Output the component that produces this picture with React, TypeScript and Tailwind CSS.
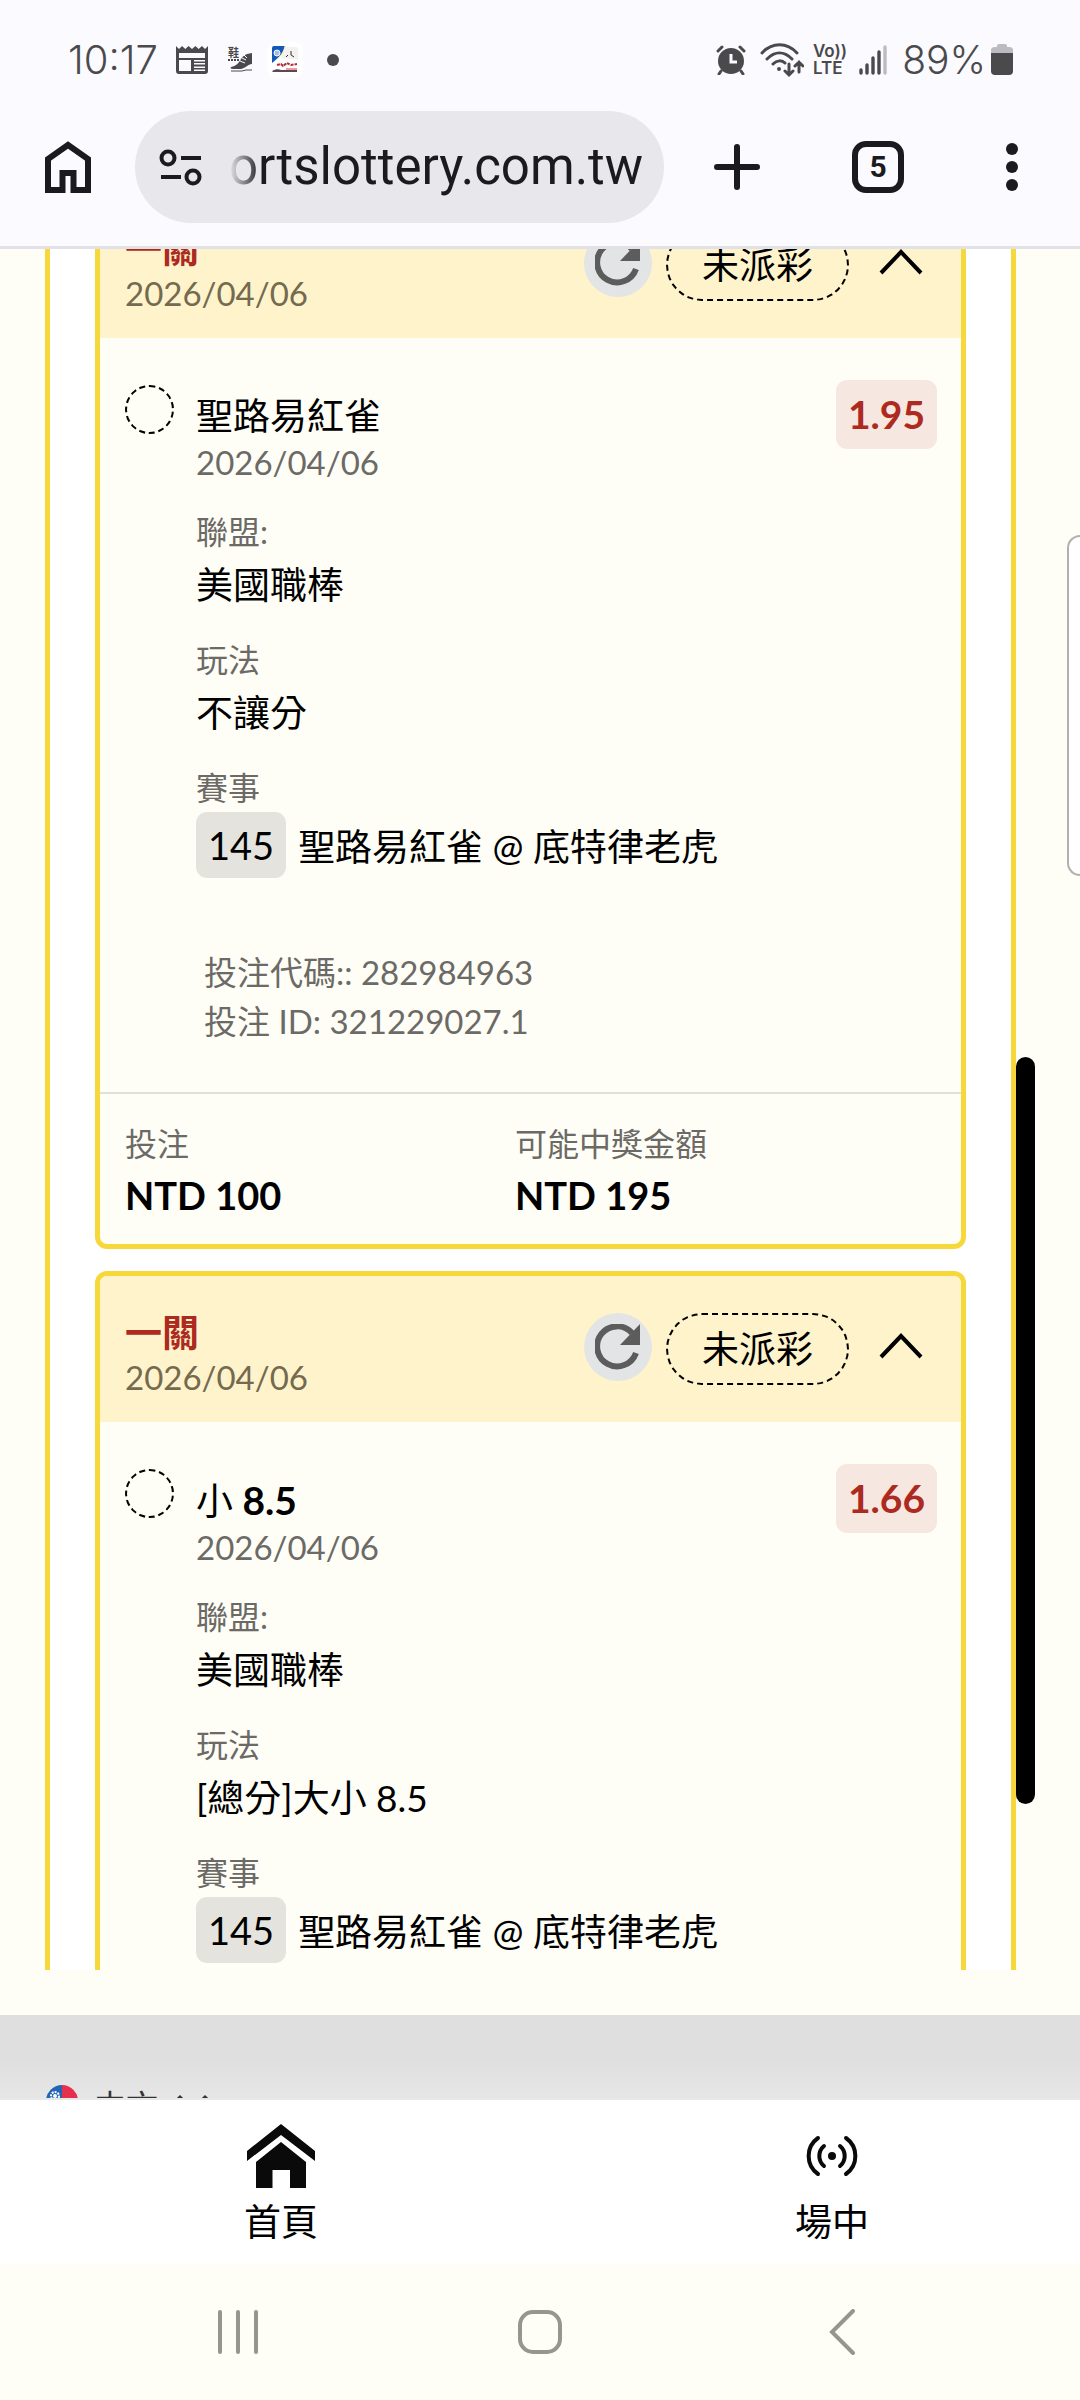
import React from "react";

type Bet = {
  id: string;
  title: React.ReactNode;
  date: string;
  odds: string;
  fields: { label: string; value: string }[];
  eventNo: string;
  match: string;
  code: string;
  betId: string;
  stake: string;
  payout: string;
};

const bets: Bet[] = [
  {
    id: "a",
    title: "聖路易紅雀",
    date: "2026/04/06",
    odds: "1.95",
    fields: [
      { label: "聯盟:", value: "美國職棒" },
      { label: "玩法", value: "不讓分" },
    ],
    eventNo: "145",
    match: "聖路易紅雀 @ 底特律老虎",
    code: "投注代碼:: 282984963",
    betId: "投注 ID: 321229027.1",
    stake: "NTD 100",
    payout: "NTD 195",
  },
  {
    id: "b",
    title: (
      <>
        小 <b className="text-[39px] font-bold">8.5</b>
      </>
    ),
    date: "2026/04/06",
    odds: "1.66",
    fields: [
      { label: "聯盟:", value: "美國職棒" },
      { label: "玩法", value: "[總分]大小 8.5" },
    ],
    eventNo: "145",
    match: "聖路易紅雀 @ 底特律老虎",
    code: "",
    betId: "",
    stake: "",
    payout: "",
  },
];

function StatusBar() {
  return (
    <div className="flex h-[111px] items-center pt-2 pr-[67px] pl-[68px] font-['Inter','Noto_Sans_CJK_TC',sans-serif] text-[#4a4a4c]">
      <span className="text-[40px] leading-none font-light">10:17</span>
      <svg width="32" height="28" viewBox="0 0 32 28" aria-hidden="true" className="ml-[18px]">
        <path d="M0 0l3 3 3-3 3.300 3 3.300-3 3.400 3 3.400-3 3.300 3 3.300-3 3 3 3-3v25q0 3-3 3H3q-3 0-3-3z" fill="currentColor" />
        <path d="M3 7h26v5H3zM3 14h12v11H3zM18 14h11v1.500H18zM18 17h11v1.500H18zM18 20.500h11V22H18zM18 23.500h11V25H18z" fill="#fbfaff" />
      </svg>
      <svg width="25" height="25" viewBox="0 0 25 25" aria-hidden="true" fill="currentColor" className="ml-5 overflow-visible">
        <text x="0" y="10" fontSize="11" fontWeight="700" fontFamily="Noto Sans CJK TC">
          鞋
        </text>
        <path d="M0 12h2v2H0zM3 12h2v2H3zM6 12h2v2H6zM9 12h2v2H9z" />
        <path d="M3 20c5-1 8-4 10-8 2-3 4-4 6-5l5-1v11c-4 0-6 4-11 5H5c-2 0-3-1-2-2z" />
        <path d="M12 14l5 2M14 11l4 2M16 8l3 3" stroke="#fbfaff" />
        <path d="M3 24h11l4-1h6" stroke="currentColor" fill="none" />
      </svg>
      <svg width="36" height="36" viewBox="0 0 36 36" aria-hidden="true" className="ml-[14px]">
        <rect width="36" height="36" rx="9" fill="#fff" />
        <path d="M7 4h11c-2 6-4 10-13 17V6q0-2 2-2z" fill="#1558b8" />
        <path d="M18 4c-1 6-3 9-8 13" stroke="#f3d98c" fill="none" />
        <path d="M18 5h11q2 0 2 2v11l-17-2z" fill="#f3f2ee" />
        <circle cx="10" cy="11" r="3" fill="#9cc0ee" stroke="#fff" />
        <path d="M24 9v4l3 2M19 15l2-2" stroke="#333" fill="none" />
        <path d="M10 23l4-1 2 2 4-3 4 2 6-1" stroke="#b12c38" strokeWidth="2" strokeDasharray="3 1" fill="none" />
        <path d="M19 27h11" stroke="#f09aa0" strokeWidth="2" />
        <path d="M5 29c3-2 7-2 9-1h16v2H6z" fill="#5a4a58" />
      </svg>
      <span className="ml-6 size-3 rounded-full bg-[#4a4a4c]" />
      <div className="ml-auto flex items-center">
        <svg width="30" height="30" viewBox="0 0 30 30" aria-hidden="true" className="mr-[14px]">
          <circle cx="15" cy="16" r="13" fill="currentColor" />
          <path d="M2 6l4-4M28 6l-4-4M5 26l-2 3M25 26l2 3" stroke="currentColor" strokeWidth="3" strokeLinecap="round" />
          <path d="M15 9v8h6" stroke="#fbfaff" strokeWidth="3" fill="none" />
        </svg>
        <svg width="44" height="36" viewBox="0 0 44 36" aria-hidden="true" className="mr-[9px]" fill="none" stroke="currentColor" strokeWidth="3" strokeLinecap="round">
          <path d="M2 11c10-11 25-11 35 0M7 17c8-8 17-8 25 0M13 22c4-4 9-4 12-1" />
          <circle cx="19" cy="27" r="1" fill="currentColor" strokeWidth="2" />
          <path d="M29 22v10M25 29l4 4 4-4M39 30V20M35 24l4-4 4 4" />
        </svg>
        <div className="mr-3 flex flex-col text-[17px] leading-[17px] font-semibold">
          <span>Vo))</span>
          <span>LTE</span>
        </div>
        <svg width="28" height="30" viewBox="0 0 28 30" aria-hidden="true" className="mr-[15px]" strokeWidth="3.4" strokeLinecap="round" stroke="currentColor">
          <path d="M2 25v3M8 20v8M14 13v15M20 7v21" />
          <path d="M26 2v26" stroke="#bcbcc0" />
        </svg>
        <span className="text-[39px] leading-none font-light">89%</span>
        <svg width="22" height="31" viewBox="0 0 22 31" aria-hidden="true" className="ml-[5px]">
          <path d="M6 2q0-2 2-2h6q2 0 2 2v1h2q4 0 4 3v4H0V6q0-3 4-3h2z" fill="#bcbcc0" />
          <path d="M0 9h22v18q0 4-4 4H4q-4 0-4-4z" fill="currentColor" />
        </svg>
      </div>
    </div>
  );
}

function BrowserBar() {
  return (
    <div className="flex items-center pr-[45px] pb-[23px] pl-[45px] text-[#1b1b1f]">
      <button aria-label="Home" className="shrink-0">
        <svg width="46" height="52" viewBox="0 0 46 52" fill="none" stroke="currentColor" strokeWidth="6" aria-hidden="true">
          <path d="M3 49V18L23 4l20 14v31H28.500V32h-11v17z" />
        </svg>
      </button>
      <div className="ml-11 flex h-28 min-w-0 flex-1 items-center rounded-full bg-[#e8e7ec] pr-4 pl-6">
        <button aria-label="Site settings" className="shrink-0">
          <svg width="44" height="38" viewBox="0 0 44 38" fill="none" stroke="currentColor" strokeWidth="4" aria-hidden="true">
            <circle cx="9" cy="10" r="6.500" />
            <path d="M22 10h20M2 29h20" />
            <circle cx="34" cy="29" r="6.500" />
          </svg>
        </button>
        <input
          aria-label="Address"
          defaultValue="ortslottery.com.tw"
          className="ml-[26px] min-w-0 flex-1 bg-transparent font-['Roboto',sans-serif] text-[51px] leading-[64px] outline-none [mask-image:linear-gradient(to_right,transparent,black_32px)]"
        />
      </div>
      <button aria-label="New tab" className="ml-[50px] shrink-0">
        <svg width="46" height="46" viewBox="0 0 46 46" stroke="currentColor" strokeWidth="6" strokeLinecap="round" aria-hidden="true">
          <path d="M23 3v40M3 23h40" />
        </svg>
      </button>
      <button
        aria-label="Tabs"
        className="ml-[92px] flex size-[52px] shrink-0 items-center justify-center rounded-[14px] border-6 border-[#1b1b1f] font-['Roboto',sans-serif] text-[30px] leading-none font-bold"
      >
        5
      </button>
      <button aria-label="Menu" className="mr-[17px] ml-[102px] shrink-0">
        <svg width="12" height="48" viewBox="0 0 12 48" fill="currentColor" aria-hidden="true">
          <circle cx="6" cy="6" r="6" />
          <circle cx="6" cy="24" r="6" />
          <circle cx="6" cy="42" r="6" />
        </svg>
      </button>
    </div>
  );
}

function BetCard({ bet }: { bet: Bet }) {
  return (
    <article className="overflow-hidden rounded-[12px] border-5 border-[#f7d83a] bg-[#fffef6]">
      <header className="flex h-[146px] items-center bg-[#fff3cc] pr-[38px] pl-[25px]">
        <div className="pt-3">
          <h2 className="text-[37px] leading-[44px] font-bold text-[#ad2a20]">一關</h2>
          <p className="text-[33px] leading-[44px] text-[#746a4e]">{bet.date}</p>
        </div>
        <button aria-label="重新整理" className="mb-1 ml-auto flex size-[68px] items-center justify-center rounded-full bg-[#e3e4e6]">
          <svg width="46" height="46" viewBox="0 0 46 46" aria-hidden="true">
            <path d="M41 29A20 20 0 1 1 37 9" fill="none" stroke="#5c5c5c" strokeWidth="6" />
            <path d="M45 0v21H25z" fill="#5c5c5c" />
          </svg>
        </button>
        <span className="ml-[14px] flex h-[72px] items-center rounded-[36px] border-2 border-dashed border-black px-[34px] text-[37px]">未派彩</span>
        <button aria-label="收合" className="mb-1.5 ml-[30px]">
          <svg width="44" height="26" viewBox="0 0 44 26" fill="none" stroke="#000" strokeWidth="4" aria-hidden="true">
            <path d="M2 24L22 3l20 21" />
          </svg>
        </button>
      </header>

      <div className="flex items-start pt-[42px] pr-6 pl-[25px]">
        <span className="mt-[5px] size-[49px] shrink-0 rounded-full border-2 border-dashed border-black" />
        <div className="ml-[22px] flex-1">
          <h3 className="pt-3 text-[37px] leading-[48px]">{bet.title}</h3>
          <p className="text-[33px] leading-[44px] text-[#6b6a66]">{bet.date}</p>
          <dl className="flex flex-col gap-[22px] pt-6">
            {bet.fields.map((f) => (
              <div key={f.label}>
                <dt className="text-[32px] leading-[48px] text-[#6b6a66]">{f.label}</dt>
                <dd className="text-[37px] leading-[58px]">{f.value}</dd>
              </div>
            ))}
            <div>
              <dt className="text-[32px] leading-[48px] text-[#6b6a66]">賽事</dt>
              <dd className="flex items-center gap-3 text-[37px]">
                <span className="flex h-[66px] items-center rounded-[11px] bg-[#e5e3dd] px-3 text-[38px]">{bet.eventNo}</span>
                <span className="pt-1">{bet.match}</span>
              </dd>
            </div>
          </dl>
          <div className="mt-[70px] ml-2 pb-[46px] text-[33px] leading-[49px] text-[#6b6a66]">
            <p>{bet.code}</p>
            <p>{bet.betId}</p>
          </div>
        </div>
        <span className="flex h-[69px] items-center rounded-[11px] bg-[#f7e7e1] px-3 text-[39px] font-bold text-[#ad2a20]">{bet.odds}</span>
      </div>

      <dl className="grid grid-cols-2 border-t-2 border-[#e2e0da] pt-[26px] pr-14 pb-[22px] pl-[25px]">
        <div>
          <dt className="text-[32px] leading-[48px] text-[#6b6a66]">投注</dt>
          <dd className="text-[38px] leading-[54px] font-bold">{bet.stake}</dd>
        </div>
        <div>
          <dt className="text-[32px] leading-[48px] text-[#6b6a66]">可能中獎金額</dt>
          <dd className="text-[38px] leading-[54px] font-bold">{bet.payout}</dd>
        </div>
      </dl>
    </article>
  );
}

function SiteFooter() {
  return (
    <div className="h-[85px] overflow-hidden border-b-2 border-[#e8e8e8] bg-linear-to-b from-[#dfdfdf] from-50% to-[#e6e6e6] pt-[70px] pl-[46px]">
      <div className="flex items-start text-[32px] leading-[42px] text-[#333]">
        <svg width="32" height="32" viewBox="0 0 32 32" aria-hidden="true">
          <path d="M0 16A16 16 0 0 1 16 0v16z" fill="#2464b4" />
          <path d="M16 0a16 16 0 0 1 0 32A16 16 0 0 1 0 16h16z" fill="#e62e4d" />
          <circle cx="9" cy="11" r="4" fill="none" stroke="#fff" strokeWidth="2" strokeDasharray="2 1" />
          <circle cx="9" cy="11" r="2" fill="#fff" />
        </svg>
        <span className="ml-4">中文</span>
        <svg width="40" height="24" viewBox="0 0 40 24" className="ml-4" fill="none" stroke="#333" strokeWidth="3" aria-hidden="true">
          <path d="M0 18l6-6 6 6M25 18l6-6 6 6" />
        </svg>
      </div>
    </div>
  );
}

function TabBar() {
  return (
    <nav className="flex h-[164px] justify-between bg-white pr-[211px] pl-[244px]">
      <a href="#home" className="flex flex-col items-center pt-6 text-[37px]">
        <svg width="68" height="64" viewBox="0 0 68 64" fill="#0a0a0a" aria-hidden="true">
          <path d="M34 0l34 27v10L34 11 0 37V27z" />
          <path d="M34 18l25 20v26H43V46H25.500v18H9V38z" />
        </svg>
        <span className="mt-1.5 leading-[56px]">首頁</span>
      </a>
      <a href="#live" className="flex flex-col items-center pt-6 text-[37px]">
        <svg width="52" height="64" viewBox="0 0 52 64" fill="none" stroke="#0a0a0a" strokeWidth="4" strokeLinecap="round" aria-hidden="true">
          <circle cx="26" cy="32" r="4" fill="#0a0a0a" stroke="none" />
          <path d="M12 14a22 22 0 0 0 0 36M40 14a22 22 0 0 1 0 36M18 22a13 13 0 0 0 0 20M34 22a13 13 0 0 1 0 20" />
        </svg>
        <span className="mt-1.5 leading-[56px]">場中</span>
      </a>
    </nav>
  );
}

function SystemNav() {
  return (
    <div className="grid h-[136px] grid-cols-3 place-items-center px-[87px] text-[#969691]">
      <button aria-label="Recent apps">
        <svg width="40" height="44" viewBox="0 0 40 44" stroke="currentColor" strokeWidth="4" strokeLinecap="round" aria-hidden="true">
          <path d="M2 2v40M20 2v40M38 2v40" />
        </svg>
      </button>
      <button aria-label="Home screen" className="size-[44px] rounded-[15px] border-4 border-[#969691]" />
      <button aria-label="Back">
        <svg width="26" height="46" viewBox="0 0 26 46" fill="none" stroke="currentColor" strokeWidth="4" strokeLinecap="round" aria-hidden="true">
          <path d="M24 2L3 23l21 21" />
        </svg>
      </button>
    </div>
  );
}

export default function App() {
  return (
    <div className="relative flex h-screen flex-col overflow-hidden bg-[#fffef6] font-['Lato','Noto_Sans_CJK_TC',sans-serif] text-black">
      <div className="border-b-3 border-[#e2e1e7] bg-[#fbfaff]">
        <StatusBar />
        <BrowserBar />
      </div>
      <main className="mb-[45px] min-h-0 flex-1 overflow-hidden">
        <div className="mr-16 ml-[45px] border-x-5 border-[#f7d83a] bg-white px-[45px]">
          <div className="-mt-[62px] flex flex-col gap-[22px]">
            {bets.map((bet) => (
              <BetCard key={bet.id} bet={bet} />
            ))}
          </div>
        </div>
      </main>
      <SiteFooter />
      <TabBar />
      <SystemNav />
      <div className="absolute top-[1057px] right-[45px] h-[747px] w-[19px] rounded-full bg-black" />
      <div className="absolute top-[535px] right-0 h-[341px] w-[13px] rounded-l-[13px] border-2 border-r-0 border-[#b0b0ae] bg-white" />
    </div>
  );
}
